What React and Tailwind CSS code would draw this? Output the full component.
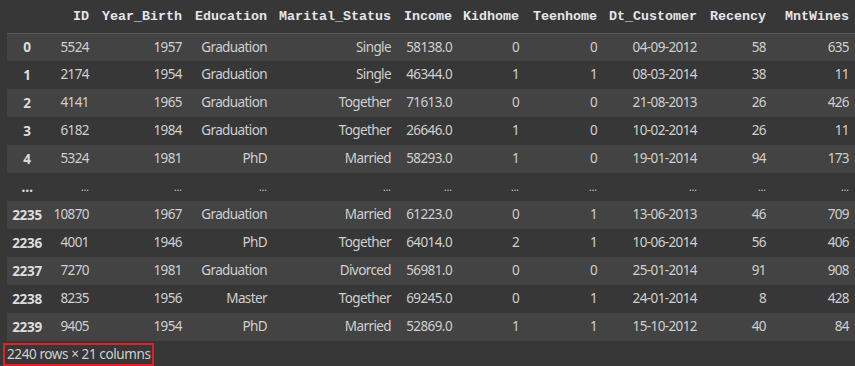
const cols = [
  { name: 'ID', w: 'w-[47px]' },
  { name: 'Year_Birth', w: 'w-[93px]' },
  { name: 'Education', w: 'w-[85px]' },
  { name: 'Marital_Status', w: 'w-[124px]' },
  { name: 'Income', w: 'w-[61px]' },
  { name: 'Kidhome', w: 'w-[67px]' },
  { name: 'Teenhome', w: 'w-[78px]' },
  { name: 'Dt_Customer', w: 'w-[100px]' },
  { name: 'Recency', w: 'w-[69px]' },
  { name: 'MntWines', w: 'w-[83px]' },
]

const rows = [
  ['0', '5524', '1957', 'Graduation', 'Single', '58138.0', '0', '0', '04-09-2012', '58', '635'],
  ['1', '2174', '1954', 'Graduation', 'Single', '46344.0', '1', '1', '08-03-2014', '38', '11'],
  ['2', '4141', '1965', 'Graduation', 'Together', '71613.0', '0', '0', '21-08-2013', '26', '426'],
  ['3', '6182', '1984', 'Graduation', 'Together', '26646.0', '1', '0', '10-02-2014', '26', '11'],
  ['4', '5324', '1981', 'PhD', 'Married', '58293.0', '1', '0', '19-01-2014', '94', '173'],
  ['...', '...', '...', '...', '...', '...', '...', '...', '...', '...', '...'],
  ['2235', '10870', '1967', 'Graduation', 'Married', '61223.0', '0', '1', '13-06-2013', '46', '709'],
  ['2236', '4001', '1946', 'PhD', 'Together', '64014.0', '2', '1', '10-06-2014', '56', '406'],
  ['2237', '7270', '1981', 'Graduation', 'Divorced', '56981.0', '0', '0', '25-01-2014', '91', '908'],
  ['2238', '8235', '1956', 'Master', 'Together', '69245.0', '0', '1', '24-01-2014', '8', '428'],
  ['2239', '9405', '1954', 'PhD', 'Married', '52869.0', '1', '1', '15-10-2012', '40', '84'],
]

export default function App() {
  return (
    <div className="w-[855px] h-[366px] overflow-hidden bg-[#373737] text-[#cfcfcf] font-['Noto_Sans',sans-serif]">
      <div className="pl-[7px]">
        <table className="border-collapse table-fixed">
          <thead>
            <tr className="h-[33px] border-b border-[#5a5a5a]">
              <th className="w-[41px]"></th>
              {cols.map(c => (
                <th key={c.name} className={`${c.w} pr-[6px] pt-[1px] text-right align-middle font-['Liberation_Mono',monospace] font-bold text-[13.33px] text-[#e4e4ec] whitespace-nowrap`}>
                  {c.name}
                </th>
              ))}
            </tr>
          </thead>
          <tbody>
            {rows.map((r, i) => (
              <tr key={i} className={i % 2 === 0 ? 'h-[28px] bg-[#434343]' : 'h-[28px]'}>
                <th className="w-[41px] pr-[1px] text-center font-bold text-[13.5px] tracking-[-0.3px] text-[#dcdcdc]">{r[0] === '...' ? '…' : r[0]}</th>
                {r.slice(1).map((v, j) => (
                  <td key={j} className="pr-[6px] text-right text-[13.5px] tracking-[-0.6px] whitespace-nowrap leading-none">
                    {v === '...' ? <span className="text-[10px] tracking-normal">…</span> : v}
                  </td>
                ))}
              </tr>
            ))}
          </tbody>
        </table>
      </div>
      <div className="mt-[2px] ml-[3px] inline-block border-2 border-[#e0202a] px-[2px] py-[1px] text-[13.5px] tracking-[-0.4px] leading-[17px] text-[#d0d0d0]">
        2240 rows × 21 columns
      </div>
    </div>
  )
}
